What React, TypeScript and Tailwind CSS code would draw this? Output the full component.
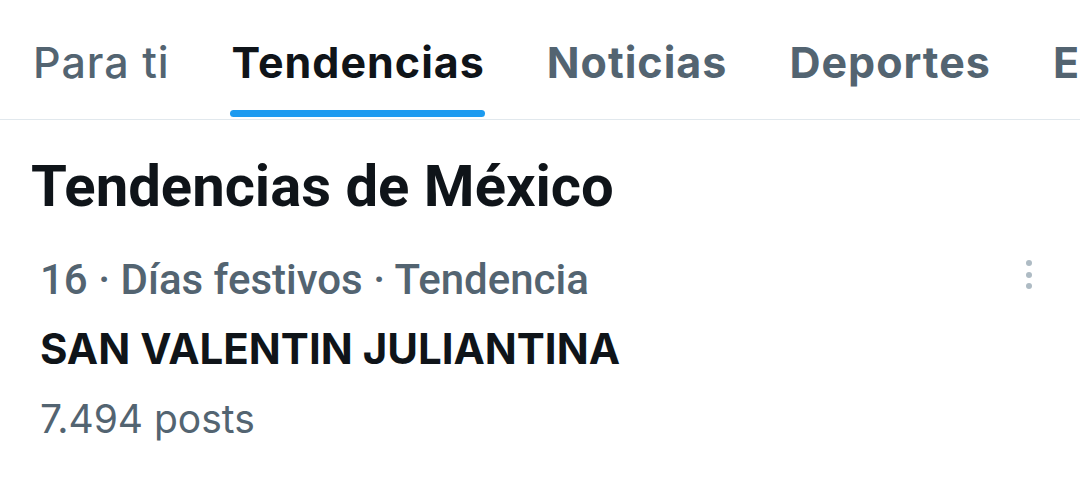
const tabs = ["Para ti", "Tendencias", "Noticias", "Deportes", "Entretenimiento"];

export default function App() {
  return (
    <div className="h-[490px] w-[1080px] overflow-hidden bg-white font-['Inter',sans-serif]">
      {/* Tabs */}
      <nav className="flex h-[120px] overflow-hidden whitespace-nowrap border-b border-[#e1e8ed] pl-[2px]">
        {tabs.map((t, i) => (
          <div key={t} className="flex shrink-0 flex-col px-[31px]">
            <div className="flex-1 pt-[41px]">
              <span
                className={
                  i === 1
                    ? "block text-[43px] font-bold leading-[43px] tracking-[1px] text-[#0f1419]"
                    : i === 0
                    ? "block text-[43px] font-medium leading-[43px] tracking-[1px] text-[#536471]"
                    : "block text-[43px] font-bold leading-[43px] tracking-[1px] text-[#536471]"
                }
              >
                {t}
              </span>
            </div>
            <div
              className={
                i === 1
                  ? "mb-[2px] ml-[-2px] h-[7px] rounded-full bg-[#1d9bf0]"
                  : "mb-[2px] h-[7px]"
              }
            />
          </div>
        ))}
      </nav>

      <h2 className="pl-[31px] pt-[37px] font-['Roboto',sans-serif] text-[58px] font-bold leading-[58px] text-[#0f1419]">
        Tendencias de México
      </h2>

      {/* Trend item */}
      <div className="flex items-start justify-between pl-10 pr-[48px] pt-[44px]">
        <div className="flex flex-col">
          <div className="font-['Roboto',sans-serif] text-[42px] font-medium leading-[42px] text-[#536471]">
            16 · Días festivos · Tendencia
          </div>
          <div className="mt-[27px] text-[42px] font-bold leading-[42px] text-[#0f1419]">
            SAN VALENTIN JULIANTINA
          </div>
          <div className="mt-[29px] text-[39px] leading-[39px] text-[#536471]">
            7.494 posts
          </div>
        </div>
        <div className="mt-[1px] flex flex-col gap-[5.5px]">
          <span className="h-[6px] w-[6px] rounded-full bg-[#aebbc4]" />
          <span className="h-[6px] w-[6px] rounded-full bg-[#aebbc4]" />
          <span className="h-[6px] w-[6px] rounded-full bg-[#aebbc4]" />
        </div>
      </div>
    </div>
  );
}
